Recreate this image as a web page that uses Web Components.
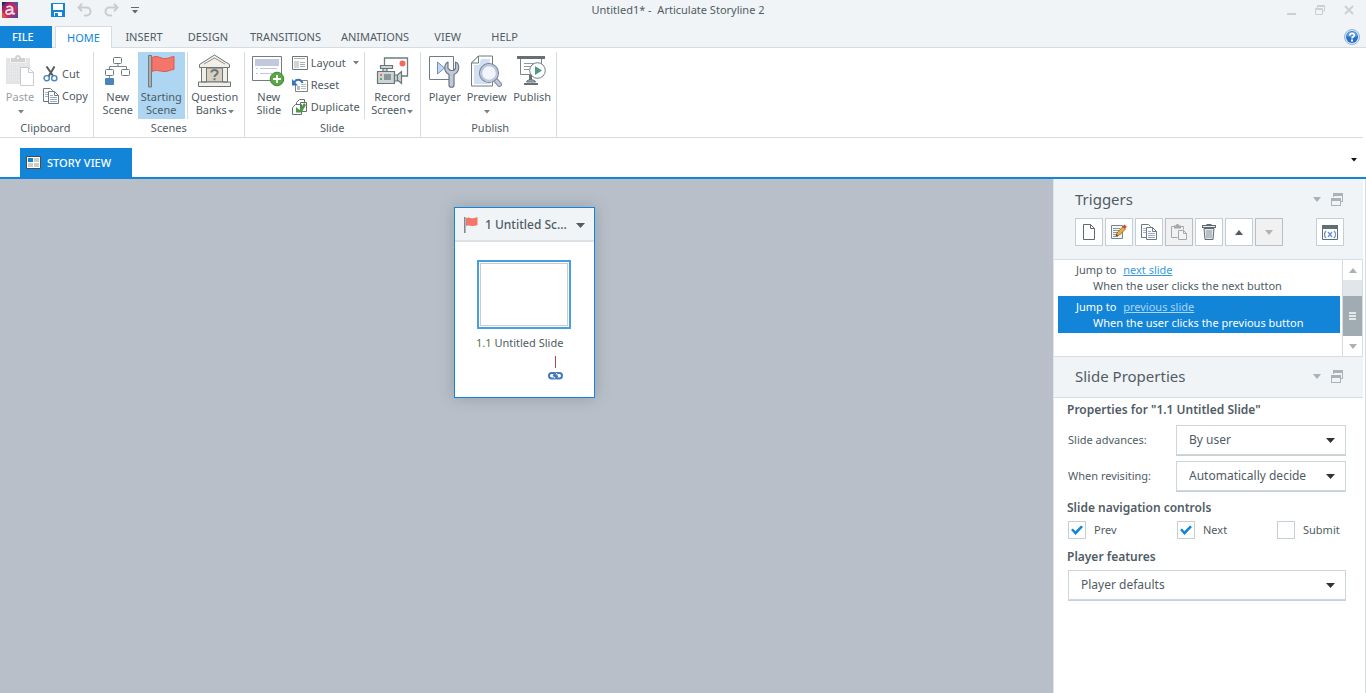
<!DOCTYPE html>
<html lang="en">
<head>
<meta charset="utf-8">
<title>Untitled1* - Articulate Storyline 2</title>
<style>
  :root {
    --blue: #1385d9;
    --chrome: #f0f4f6;
    --line: #d5dde2;
    --text: #505c64;
    --soft: #a9b2b8;
    --canvas: #b8bfc8;
  }
  html, body { height: 100%; }
  body {
    margin: 0;
    font: 11px/16px "Noto Sans", "Open Sans", sans-serif;
    color: var(--text);
    background: #fff;
  }
</style>
</head>
<body>
<story-app></story-app>

<script>
const BASE = `*{box-sizing:border-box}
button{font:inherit;color:inherit;background:none;border:0;padding:0;margin:0}
a{color:inherit}`;

function define(name, html, setup) {
  const tpl = document.createElement('template');
  tpl.innerHTML = html;
  customElements.define(name, class extends HTMLElement {
    constructor() {
      super();
      const root = this.attachShadow({ mode: 'open' });
      const base = document.createElement('style');
      base.textContent = BASE;
      root.append(base, tpl.content.cloneNode(true));
    }
    connectedCallback() { if (setup) setup(this, this.shadowRoot); }
  });
}

/* name: [width, height, markup] */
const ICONS = {
  logo: [16, 16, `<defs><linearGradient id="g" x1="0" y1="0" x2="1" y2="1"><stop offset="0" stop-color="#3a2a6a"/><stop offset=".3" stop-color="#b3246a"/><stop offset=".6" stop-color="#c8305c"/><stop offset="1" stop-color="#4a3fb0"/></linearGradient></defs><path fill="url(#g)" d="M0 0h16v16H0z"/><path fill="#e8503c" d="M0 9l5 7H0z"/><path fill="#2f5fb4" d="M11 0h5v5z"/><path fill="#1f2a5c" d="M0 0h4L0 4z"/><g fill="none" stroke="#f4dfe8" stroke-width="1.800"><path d="M4.500 5.500C6 3.600 10.500 4 10.500 7v3.500c0 1.500 1.200 1.600 2.500.8"/><path d="M10.500 7.500C7 7.500 4 8 4 10.200c0 2.800 5 2.300 6.500-.4"/></g>`],
  save: [14, 14, `<path fill="#1385d9" d="M0 0h14v14H0z"/><path fill="#fff" d="M2 1h10v6H2zM3 9h8v4H3z"/><path fill="#1385d9" d="M4 10h3v3H4z"/>`],
  undo: [15, 14, `<path fill="none" stroke="#c9cdcf" stroke-width="2" d="M5 .8L1.500 4.500 5 8.200M2 4.500h7.500a4 4 0 0 1 0 8H7"/>`],
  redo: [15, 14, `<path fill="none" stroke="#c9cdcf" stroke-width="2" d="M10 .8l3.500 3.700L10 8.200M13 4.500H5.500a4 4 0 0 0 0 8H8"/>`],
  qat: [8, 7, `<path fill="#666" d="M0 0h8v1H0zM1 3h6L4 6.500z"/>`],
  min: [9, 10, `<path fill="#ccd0d3" d="M0 8h9v2H0z"/>`],
  restore: [10, 10, `<path fill="none" stroke="#ccd0d3" d="M2.500 3V.5h7V6H8M.5 3.500h7v6h-7zM.5 4.500h7M2.500 1.500h7"/>`],
  close: [10, 10, `<path fill="none" stroke="#ccd0d3" stroke-width="2" d="M1 1l8 8M9 1L1 9"/>`],
  help: [16, 16, `<circle cx="8" cy="8" r="7.500" fill="#dbe9f7" stroke="#8db6dd"/><circle cx="8" cy="8" r="6" fill="#2a6fc4"/><path fill="#5f9be0" d="M2.500 7a5.600 5.600 0 0 1 11 0c-3 1.500-8 1.500-11 0z"/><path fill="none" stroke="#fff" stroke-width="1.800" d="M5.800 6.500c0-3 4.500-2.800 4.500-.3C10.300 7.800 8 7.800 8 9.600"/><path fill="#fff" d="M7 10.600h2v2H7z"/>`],
  arrow: [6, 4, `<path fill="currentColor" d="M0 0h6L3 3.500z"/>`],
  arrowlg: [9, 5, `<path fill="currentColor" d="M0 0h9L4.500 5z"/>`],
  up: [8, 5, `<path fill="currentColor" d="M0 5h8L4 0z"/>`],
  down: [8, 5, `<path fill="currentColor" d="M0 0h8L4 5z"/>`],
  paste: [28, 32, `<path fill="#e3e4e5" d="M0 3h24v26H0z"/><path fill="#f3f4f4" d="M4 3h16v5H4z"/><path fill="#d0d2d4" d="M5 7V3h4c0-4 6-4 6 0h4v4z"/><circle cx="12" cy="3" r="1" fill="#fff"/><path stroke="#f1f2f2" stroke-dasharray="1 1" d="M2 10h20M2 13h12M2 16h12M2 19h12M2 22h12M2 25h12"/><path fill="#fff" stroke="#c9cccf" d="M14.500 12.500h8l5 5v13h-13z"/><path fill="none" stroke="#c9cccf" d="M22.500 12.500v5h5"/>`],
  cut: [16, 16, `<path stroke="#555c60" stroke-width="2" fill="none" d="M3.500 .5l7 10M11.500 .5l-6 10"/><circle cx="3.700" cy="12.200" r="2.600" fill="#fff" stroke="#4a83c0" stroke-width="1.400"/><circle cx="11.300" cy="12.200" r="2.600" fill="#fff" stroke="#4a83c0" stroke-width="1.400"/>`],
  copy: [16, 16, `<path fill="#fff" stroke="#6c7b80" d="M.5.5h7l2 2v11h-9z"/><path stroke="#a9b4cf" d="M2 4.500h3M2 6.500h3M2 8.500h3"/><path fill="#fff" stroke="#6c7b80" d="M5.500 3.500h6l4 4v8h-10z"/><path fill="none" stroke="#6c7b80" d="M11.500 3.500v4h4"/><path stroke="#9aa8d0" d="M7 7.500h3M7 9.500h7M7 11.500h7M7 13.500h7"/>`],
  newscene: [26, 30, `<path fill="none" stroke="#7b8587" d="M13 7v3.500M4.500 13v-2.500h17V13"/><g fill="#fff" stroke="#6f797b"><rect x="8.500" y="1.500" width="8" height="6" rx="1"/><rect x=".5" y="13.500" width="8" height="6" rx="1"/><rect x="16.500" y="13.500" width="8" height="6" rx="1"/></g><path stroke="#7b8587" d="M4.500 19v3"/><rect x="0" y="22" width="9" height="7" rx="1" fill="#4a83c0"/>`],
  flag: [27, 33, `<path fill="#a7b0b2" stroke="#707b7e" d="M.5.5h3v31.500h-3z"/><path fill="#f4756a" stroke="#dd5a50" d="M4 2.500c6-3 9 2 14 1 3 0 5-2 8-2v13c-4 0-6 2.500-10 2-5-.5-8-2-12 0z"/>`],
  flagsm: [14, 17, `<path stroke="#7a8689" stroke-width="1.500" d="M.8 0v16"/><path fill="#f4756a" d="M2 1c3-1.600 5 .6 7 .3C11 1 12 0 13.500.2v8C11 8 10 9.400 8 9 6 8.600 4 8 2 9z"/>`],
  bank: [33, 34, `<g fill="#f4efe6" stroke="#6a7777" stroke-linejoin="round"><path d="M1.500 10.500L16.500 1l15 9.500v3h-30z"/><path fill="#d8cfc1" d="M8 14h17v14H8z"/><path d="M3.500 13.500h5V28h-5zM24.500 13.500h5V28h-5zM.5 28h32v4.500H.5z"/></g><path fill="none" stroke="#8a9494" d="M6 10l10.500-6L27 10"/><path fill="none" stroke="#6a777c" stroke-width="2" d="M13.300 18.500c0-3.500 6.400-3.200 6.400 0 0 2.200-3.200 2-3.200 4.500"/><path fill="#6a777c" d="M15.500 24.200h2v2h-2z"/>`],
  newslide: [33, 31, `<path fill="#fff" stroke="#6f7d80" d="M.5.5h29v24H.5z"/><path fill="#c3c9dd" d="M3 3h24v7H3zM4 12h2v1H4zM8 12h17v1H8zM4 17h2v1H4zM8 17h12v1H8z"/><circle cx="25" cy="23" r="6.800" fill="#5aa746" stroke="#3f8a35"/><path stroke="#fff" stroke-width="2" d="M25 19v8M21 23h8"/>`],
  layout: [16, 15, `<path fill="#fff" stroke="#6d7578" d="M.5.5h15v13H.5z"/><path fill="#a9afb1" d="M2 2h11v1H2zM8 6h5v1H8zM8 8h5v1H8zM8 10h5v1H8z"/><path fill="#d2d4d6" d="M2 5h5v7H2z"/>`],
  reset: [17, 15, `<path fill="#fff" stroke="#7b8486" d="M3.500 2.500h12v11h-12z"/><path fill="#b5bcc0" d="M9 6h5v1H9zM9 8h5v1H9zM9 10h5v1H9zM5 8h3v4H5z"/><path fill="#fff" d="M1 0h9v6H1z"/><path fill="none" stroke="#3a76b4" stroke-width="2" d="M2.500 4.500c1-3.500 6.500-4 8 .5"/><path fill="#3a76b4" d="M0 1v6.500h6z"/>`],
  duplicate: [16, 16, `<path fill="#fff" stroke="#657174" d="M4.500 3.500l3-3h5v10h-8z"/><path fill="#fff" stroke="#657174" d="M8.500 3.500h6v9h-6zM.5 8.500l3-3h6v10h-9z"/><path fill="#4b9a3d" d="M4 8l3.500 3L12 4l2 2-4.500 7.500H4z"/>`],
  record: [33, 29, `<path fill="#fff" stroke="#707c7e" stroke-width="1.300" d="M8.500 1h23v18h-23z"/><circle cx="26.500" cy="6.500" r="3" fill="#f26a5a"/><g fill="#cfd4d6" stroke="#687476" stroke-width="1.200"><path d="M4.500 8.500h12v3h-12z"/><path d="M7 11.500V15h4v-3.500z"/><path d="M1.500 14.500h17v12h-17z"/><path d="M18.500 18h3v6h-3zM21.500 18l4-3.500v12l-4-3.500z"/></g><path fill="#f26a5a" d="M4 17h2v2H4z"/><path fill="#58a77c" d="M4 21h2v2H4z"/><path fill="#8b9698" d="M8 17h7v6H8z"/>`],
  player: [31, 33, `<path fill="#fff" stroke="#6f7d80" d="M.5 1.500h24v23H.5z"/><path fill="#c6d6ef" stroke="#6a8fc4" d="M8.500 7l7 6-7 6z"/><path fill="#c3c8d8" stroke="#6b7784" stroke-width="1.200" stroke-linejoin="round" d="M19 7c-4 2-5 9 1 12.500V30c0 3 5 3 5 0V19.500C31 17 31 9 26.500 7v6.500l-2 2h-3l-2.500-2z"/>`],
  preview: [32, 33, `<path fill="#fff" stroke="#6f7d80" d="M.5 8l7-7h14v30H.5z"/><path fill="#d3dff2" d="M3 10h5l2-6h9v25H3z"/><path fill="#fff" stroke="#6f7d80" d="M.5 8h7V1z"/><path stroke="#7f8ca0" stroke-width="5" stroke-linecap="round" d="M24.500 25l4 4.500"/><path stroke="#c3c8d8" stroke-width="3" stroke-linecap="round" d="M24.500 25l4 4.500"/><circle cx="18" cy="18" r="8" fill="#fff" stroke="#6b7784" stroke-width="4"/><circle cx="18" cy="18" r="8" fill="#f2f6fc" stroke="#bcc6dc" stroke-width="2.400"/>`],
  publish: [30, 30, `<path fill="#666f72" d="M0 0h28v3H0zM7 27h14v2H7zM12 19h3v5h-3z"/><path fill="#fff" stroke="#7b8587" d="M3.500 3v15.500h21V3"/><path stroke="#8f989a" d="M7 7.500h10M7 10.500h8M7 13.500h5"/><path fill="#a9b1b3" stroke="#666f72" d="M9.500 26c0-3 9-3 9 0z"/><circle cx="20.500" cy="14.500" r="7.800" fill="#fff" stroke="#6f7d80"/><path fill="#4d9b82" d="M18 10l7 4.500-7 4.500z"/>`],
  story: [15, 13, `<path fill="#fff" stroke="#4b4b4b" d="M.5.500h14v12H.5z"/><path fill="#1385d9" d="M2 2h5v4H2z"/><path fill="#ccc" d="M8 2h5v4H8zM2 7h5v4H2zM8 7h5v4H8z"/>`],
  link: [15, 8, `<g fill="none" stroke="#4478b8" stroke-width="2"><rect x="1" y="1" width="7.500" height="5.500" rx="2.700"/><rect x="6.500" y="1" width="7.500" height="5.500" rx="2.700"/></g><path stroke="#fff" d="M6 6.500l1-1.500M9 1L8 2.500"/><path stroke="#4478b8" stroke-width="1.800" d="M5 3l5 2"/>`],
  float: [12, 13, `<path fill="#a9b2b8" d="M2 0h10v9h-2V8h1V3H3v1H2zM0 5h10v8H0zM1 8v4h8V8z" fill-rule="evenodd"/>`],
  doc: [12, 16, `<path fill="#fff" stroke="#5f6b6e" d="M.5.5h7l4 4v11H.5z"/><path fill="none" stroke="#5f6b6e" d="M7.500.5v4h4"/>`],
  edit: [16, 16, `<path fill="#f5f6f7" stroke="#7b8486" d="M.5 1.500h11v13H.5z"/><path stroke="#8f989a" d="M2 4.500h7M2 6.500h6M2 8.500h5M2 10.500h4M2 12.500h5"/><path fill="#e8b23a" stroke="#8a5a1c" stroke-width=".8" d="M6 9l6-6.500 2.500 2.500L8.500 11 5 12z"/><path fill="#d8413b" d="M11.500 2.500L13.500.5l2.300 2.300-2 2z"/><path fill="#333" d="M5 12l.6-1.800 1.300 1.300z"/>`],
  clip: [16, 16, `<path fill="none" stroke="#a3a8aa" d="M3 2.500H.5v11h6M10 2.500h2.500v3"/><path fill="#a3a8aa" d="M3 1.500h2C5-.5 8-.5 8 1.500h2v3H3z"/><path fill="#f4f4f4" stroke="#a3a8aa" d="M7.500 6.500h5l3 3v6h-8z"/><path fill="none" stroke="#a3a8aa" d="M12.500 6.500v3h3"/>`],
  trash: [14, 16, `<path fill="#5f6b6e" d="M4.500 0h5v1H14v3H0V1h4.500z"/><path fill="#e8ecee" d="M1 2h12v1H1z"/><path fill="#e1e8ec" stroke="#5f6b6e" d="M2 4.500h10l-1 11H3z"/><path stroke="#8d989c" d="M5 6v8M7 6v8M9 6v8"/>`],
  vars: [16, 15, `<path fill="#fff" stroke="#5f6f76" d="M.5.500h15v14H.5z"/><path fill="#5f6f76" d="M0 0h16v4H0z"/><path fill="none" stroke="#6b8fd0" stroke-width="1.300" d="M4 6c-2 2-2 5 0 7M12 6c2 2 2 5 0 7M6 7l4 5M10 7l-4 5"/>`]
};

customElements.define('ui-icon', class extends HTMLElement {
  connectedCallback() {
    if (this.shadowRoot) return;
    const [w, h, body] = ICONS[this.getAttribute('name')];
    this.attachShadow({ mode: 'open' }).innerHTML =
      `<style>:host{display:inline-flex;flex:none}svg{display:block}</style>
       <svg width="${w}" height="${h}" viewBox="0 0 ${w} ${h}" aria-hidden="true">${body}</svg>`;
  }
});

define('title-bar', `
<style>
  :host{display:grid;grid-template-columns:1fr auto 1fr;align-items:center;height:26px;padding:0 12px 6px 2px;background:var(--chrome)}
  .quick{display:flex;align-items:center;gap:12px}
  .quick .save{margin-left:21px}
  button{display:flex}
  h1{margin:0;font:inherit;white-space:pre}
  .win{display:flex;justify-content:flex-end;align-items:center;gap:19px}
</style>
<div class="quick">
  <ui-icon name="logo"></ui-icon>
  <button class="save" aria-label="Save"><ui-icon name="save"></ui-icon></button>
  <button aria-label="Undo"><ui-icon name="undo"></ui-icon></button>
  <button aria-label="Redo"><ui-icon name="redo"></ui-icon></button>
  <button aria-label="Customize"><ui-icon name="qat"></ui-icon></button>
</div>
<h1>Untitled1* -  Articulate Storyline 2</h1>
<div class="win">
  <button aria-label="Minimize"><ui-icon name="min"></ui-icon></button>
  <button aria-label="Restore"><ui-icon name="restore"></ui-icon></button>
  <button aria-label="Close"><ui-icon name="close"></ui-icon></button>
</div>`);

define('ribbon-tabs', `
<style>
  :host{display:flex;height:22px;padding-right:6px;background:var(--chrome);box-shadow:inset 0 -1px var(--line)}
  button{min-width:57px;padding:0 10px;text-align:center;line-height:22px}
  .mid{min-width:64px}
  .file{min-width:52px;margin-right:3px;padding-left:12px;text-align:left;background:var(--blue);color:#fff;font-weight:500}
  .on{background:#fff;color:var(--blue);border:1px solid var(--line);border-bottom:0;line-height:20px}
  .help{min-width:0;margin-left:auto;padding:0;display:flex;align-items:center}
</style>
<button class="file">FILE</button><button class="on">HOME</button><button class="mid">INSERT</button><button class="mid">DESIGN</button><button>TRANSITIONS</button><button>ANIMATIONS</button><button>VIEW</button><button>HELP</button>
<button class="help" aria-label="Help"><ui-icon name="help"></ui-icon></button>`);

define('ribbon-group', `
<style>
  :host{display:flex;flex-direction:column;border-right:1px solid var(--line);padding:0 4px}
  :host([flush]){padding:0 2px 0 0}
  :host([spaced]){padding-right:0}
  .items{display:flex;height:67px}
  :host([spaced]) .items{gap:2px}
  h2{margin:0;font:inherit;line-height:18px;text-align:center}
</style>
<div class="items"><slot></slot></div><h2></h2>`,
(el, root) => { root.querySelector('h2').textContent = el.getAttribute('label'); });

define('tool-big', `
<style>
  :host{display:block;width:47px}
  :host([narrow]){width:40px}
  :host([wide]){width:50px}
  button{display:flex;flex-direction:column;align-items:center;width:100%;height:67px;line-height:13px;white-space:nowrap}
  :host([active]) button{background:#aed6f2}
  :host([faded]) button{color:#98a0a5}
  .pic{display:flex;align-items:center;height:38px}
  .menu{padding-left:1px;color:#7a8286}
  .menu ui-icon{vertical-align:0}
</style>
<button><span class="pic"></span><span class="one"></span><span class="two"></span></button>`,
(el, root) => {
  root.querySelector('.pic').innerHTML = `<ui-icon name="${el.getAttribute('icon')}"></ui-icon>`;
  const [one, two = ''] = el.getAttribute('label').split('|');
  root.querySelector('.one').textContent = one;
  const second = root.querySelector('.two');
  second.textContent = two;
  if (el.hasAttribute('menu')) second.insertAdjacentHTML('beforeend', '<span class="menu"><ui-icon name="arrow"></ui-icon></span>');
});

define('tool-small', `
<style>
  :host{display:block}
  button{display:flex;align-items:center;height:22px;gap:3px;white-space:nowrap}
  .pic{display:flex;width:16px}
  .menu{display:flex;padding-left:4px;color:#7a8286}
</style>
<button><span class="pic"></span><slot></slot></button>`,
(el, root) => {
  root.querySelector('.pic').innerHTML = `<ui-icon name="${el.getAttribute('icon')}"></ui-icon>`;
  if (el.hasAttribute('menu')) root.querySelector('button').insertAdjacentHTML('beforeend', '<span class="menu"><ui-icon name="arrow"></ui-icon></span>');
});

define('ribbon-bar', `
<style>
  :host{display:flex;height:90px;padding-top:4px;margin-right:3px;border-bottom:1px solid var(--line)}
  .stack{display:flex;flex-direction:column;justify-content:center;height:66px;padding:0 3px}
  .rule{width:1px;margin:0 4px 0 1px;background:var(--line)}
  .even{margin:0 2px}
</style>
<ribbon-group flush label="Clipboard">
  <tool-big narrow icon="paste" label="Paste" menu faded></tool-big>
  <div class="stack">
    <tool-small icon="cut">Cut</tool-small>
    <tool-small icon="copy">Copy</tool-small>
  </div>
</ribbon-group>
<ribbon-group label="Scenes">
  <tool-big narrow icon="newscene" label="New|Scene"></tool-big>
  <tool-big active icon="flag" label="Starting|Scene"></tool-big>
  <span class="rule even"></span>
  <tool-big wide icon="bank" label="Question|Banks" menu></tool-big>
</ribbon-group>
<ribbon-group label="Slide">
  <tool-big narrow icon="newslide" label="New|Slide"></tool-big>
  <div class="stack">
    <tool-small icon="layout" menu>Layout</tool-small>
    <tool-small icon="reset">Reset</tool-small>
    <tool-small icon="duplicate">Duplicate</tool-small>
  </div>
  <span class="rule"></span>
  <tool-big icon="record" label="Record|Screen" menu></tool-big>
</ribbon-group>
<ribbon-group spaced label="Publish">
  <tool-big narrow icon="player" label="Player"></tool-big>
  <tool-big narrow icon="preview" label="Preview" menu></tool-big>
  <tool-big icon="publish" label="Publish"></tool-big>
</ribbon-group>`);

define('view-tabs', `
<style>
  :host{display:flex;align-items:flex-end;height:41px;padding:0 9px 0 20px;border-bottom:2px solid var(--blue)}
  .tab{display:flex;align-items:center;gap:6px;width:112px;height:29px;padding-left:6px;background:var(--blue);color:#fff;font-weight:500;white-space:nowrap}
  .more{display:flex;margin-left:auto;padding-bottom:15px;color:#111}
</style>
<button class="tab"><ui-icon name="story"></ui-icon>STORY VIEW</button>
<button class="more" aria-label="More views"><ui-icon name="arrow"></ui-icon></button>`);

define('scene-card', `
<style>
  :host{display:block;width:141px;background:#fff;border:1px solid var(--blue);box-shadow:0 0 14px rgba(70,85,105,.3)}
  header{display:flex;align-items:center;height:34px;padding:0 9px;background:var(--chrome);box-shadow:inset 0 -2px #dce2e6;font-size:12px;font-weight:500}
  header span{flex:1;padding-left:7px;white-space:nowrap}
  .slide{padding:18px 22px 17px}
  .thumb{display:block;width:94px;height:69px;padding:1px;border:2px solid #459fe0;background:#fff}
  .thumb i{display:block;height:100%;border:1px solid #ccc}
  p{margin:6px 0 5px -1px;white-space:nowrap}
  p b{font-weight:400;color:#4b7d43}
  .jump{display:flex;flex-direction:column;align-items:center;width:15px;margin-left:71px;gap:4px}
  .jump i{width:1px;height:12px;background:#b0454c}
</style>
<header><ui-icon name="flagsm"></ui-icon><span>1 Untitled Sc...</span><ui-icon name="arrowlg"></ui-icon></header>
<div class="slide">
  <button class="thumb" aria-label="Untitled Slide"><i></i></button>
  <p><b>1.1</b> Untitled Slide</p>
  <div class="jump"><i></i><ui-icon name="link"></ui-icon></div>
</div>`);

define('dock-panel', `
<style>
  :host{display:block}
  header{padding:7px 19px 9px 21px;background:var(--chrome);border-top:1px solid var(--line);border-bottom:1px solid var(--line)}
  :host([first]) header{border:0;padding-top:8px;padding-bottom:13px}
  .head{display:flex;align-items:center;gap:10px;height:24px;padding-right:1px;color:var(--soft)}
  h2{flex:1;margin:0;font-size:15px;line-height:24px;font-weight:400;color:var(--text)}
  .head button{display:flex}
</style>
<header>
  <div class="head"><h2></h2>
    <button aria-label="Panel menu"><ui-icon name="down"></ui-icon></button>
    <button aria-label="Undock"><ui-icon name="float"></ui-icon></button>
  </div>
  <slot name="tools"></slot>
</header>
<slot></slot>`,
(el, root) => { root.querySelector('h2').textContent = el.getAttribute('heading'); });

define('trigger-tools', `
<style>
  :host{display:flex;gap:2px;margin-top:7px}
  button{display:flex;align-items:center;justify-content:center;width:28px;height:28px;background:#fff;border:1px solid #c3ced6}
  button[disabled]{background:#f1f1f1;border-color:#bbbec0;color:#b0b3b5}
  .vars{margin-left:auto}
</style>
<button aria-label="New trigger"><ui-icon name="doc"></ui-icon></button>
<button aria-label="Edit trigger"><ui-icon name="edit"></ui-icon></button>
<button aria-label="Copy trigger"><ui-icon name="copy"></ui-icon></button>
<button aria-label="Paste trigger" disabled><ui-icon name="clip"></ui-icon></button>
<button aria-label="Delete trigger"><ui-icon name="trash"></ui-icon></button>
<button aria-label="Move up"><ui-icon name="up"></ui-icon></button>
<button aria-label="Move down" disabled><ui-icon name="down"></ui-icon></button>
<button class="vars" aria-label="Variables"><ui-icon name="vars"></ui-icon></button>`);

define('trigger-item', `
<style>
  :host{display:block;height:37px;padding:3px 0 2px 18px;white-space:nowrap}
  :host([selected]){background:var(--blue);color:#fff}
  a{margin-left:4px;color:#3a9ae0}
  :host([selected]) a{color:#a9d6f7}
  div+div{padding-left:17px}
</style>
<div>Jump to <a href="#"></a></div><div><slot></slot></div>`,
(el, root) => { root.querySelector('a').textContent = el.getAttribute('target'); });

define('trigger-list', `
<style>
  :host{display:flex;height:97px;box-shadow:inset 0 1px var(--line)}
  .items{flex:1;padding:0 2px 0 4px}
  .bar{display:flex;flex-direction:column;width:21px;margin-top:1px;border:1px solid var(--line);border-width:0 1px;background:#e1e6ea;color:var(--soft)}
  .bar button{display:flex;align-items:center;justify-content:center;height:20px;background:#fff}
  .thumb{display:flex;flex-direction:column;align-items:center;justify-content:center;gap:1px;height:40px;margin-top:16px;background:#a0abb2}
  .thumb i{width:7px;height:2px;background:#e3e8eb}
</style>
<div class="items"><slot></slot></div>
<div class="bar">
  <button aria-label="Scroll up"><ui-icon name="up"></ui-icon></button>
  <div class="thumb"><i></i><i></i><i></i></div>
  <button aria-label="Scroll down"><ui-icon name="down"></ui-icon></button>
</div>`);

define('select-field', `
<style>
  :host{display:grid;grid-template-columns:108px 1fr;align-items:center}
  :host([wide]){grid-template-columns:1fr}
  :host([wide]) label{font-size:12px;font-weight:600;line-height:22px;margin:0 0 2px -1px}
  .box{position:relative;color:#333}
  select{appearance:none;display:block;width:100%;height:30px;margin:0;padding:0 12px;font:inherit;font-size:12px;color:var(--text);background:#fff;border:1px solid #cdd6dc;border-radius:0;box-shadow:0 1px #c9d1d7}
  .box ui-icon{position:absolute;right:11px;top:13px;pointer-events:none}
</style>
<label for="s"></label>
<div class="box"><select id="s"><option></option></select><ui-icon name="arrowlg"></ui-icon></div>`,
(el, root) => {
  root.querySelector('label').textContent = el.getAttribute('label');
  root.querySelector('option').textContent = el.getAttribute('value');
});

define('check-field', `
<style>
  :host{display:block}
  label{display:flex;align-items:center;gap:8px}
  input{appearance:none;width:18px;height:18px;margin:0;border:1px solid #c3ced6;background:#fff;display:grid;place-items:center}
  input:checked::before{content:"";width:12px;height:10px;background:var(--blue);clip-path:polygon(0 50%,16% 34%,36% 62%,84% 6%,100% 20%,38% 100%)}
</style>
<label><input type="checkbox"><slot></slot></label>`,
(el, root) => { root.querySelector('input').checked = el.hasAttribute('checked'); });

define('slide-properties', `
<style>
  :host{display:flex;flex-direction:column;gap:6px;padding:1px 17px 0 14px}
  h3{margin:0 0 0 -1px;font-size:12px;line-height:22px;font-weight:600}
  h3:first-of-type{margin-bottom:-2px}
  .checks{display:grid;grid-template-columns:109px 100px 1fr;margin:-4px 0 1px}
</style>
<h3>Properties for "1.1 Untitled Slide"</h3>
<select-field label="Slide advances:" value="By user"></select-field>
<select-field label="When revisiting:" value="Automatically decide"></select-field>
<h3>Slide navigation controls</h3>
<div class="checks">
  <check-field checked>Prev</check-field>
  <check-field checked>Next</check-field>
  <check-field>Submit</check-field>
</div>
<select-field wide label="Player features" value="Player defaults"></select-field>`);

define('story-app', `
<style>
  :host{display:flex;flex-direction:column;min-height:100vh}
  main{flex:1;display:flex}
  .canvas{flex:1;display:flex;justify-content:center;align-items:flex-start;padding:28px 4px 28px 0;background:var(--canvas)}
  aside{width:313px;padding-right:2px;border-left:1px solid #dfe4e8;border-right:1px solid var(--line);background:#fff}
</style>
<title-bar></title-bar>
<ribbon-tabs></ribbon-tabs>
<ribbon-bar></ribbon-bar>
<view-tabs></view-tabs>
<main>
  <div class="canvas"><scene-card></scene-card></div>
  <aside>
    <dock-panel first heading="Triggers">
      <trigger-tools slot="tools"></trigger-tools>
      <trigger-list>
        <trigger-item target="next slide">When the user clicks the next button</trigger-item>
        <trigger-item selected target="previous slide">When the user clicks the previous button</trigger-item>
      </trigger-list>
    </dock-panel>
    <dock-panel heading="Slide Properties"><slide-properties></slide-properties></dock-panel>
  </aside>
</main>`);
</script>
</body>
</html>
